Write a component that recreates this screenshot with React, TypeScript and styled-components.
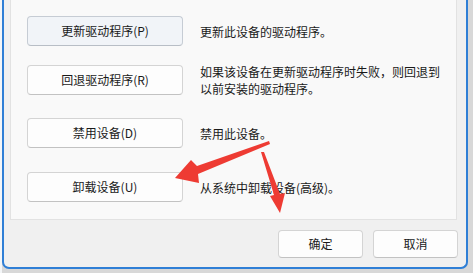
import React from "react";
import styled, { createGlobalStyle } from "styled-components";

const Global = createGlobalStyle`
  html, body { margin: 0; padding: 0; }
  body {
    width: 473px;
    height: 273px;
    overflow: hidden;
    background: #d5d5d5;
    font-family: "Noto Sans CJK SC", "Microsoft YaHei", sans-serif;
    color: #1a1a1a;
  }
`;

const Page = styled.div`
  position: relative;
  width: 473px;
  height: 273px;
  background: linear-gradient(to right, #f4f6f8 0 2px, #d8d8d8 2px);
`;

const Window = styled.div`
  margin-left: 2px;
  width: 466px;
  height: 269px;
  box-sizing: border-box;
  border: 2px solid #2f7fd6;
  border-top: none;
  border-radius: 0 0 7px 7px;
  background: #f0f0f0;
  display: flex;
  flex-direction: column;
  padding: 0 0 9px 6px;
`;

const Panel = styled.div`
  width: 447px;
  height: 220px;
  box-sizing: border-box;
  background: #f9f9f9;
  border: 1px solid #e2e2e2;
  border-top: none;
  padding: 0 0 0 16px;
  display: flex;
  flex-direction: column;
`;

const Row = styled.div<{ $gap: number }>`
  display: flex;
  align-items: center;
  height: 30px;
  margin-top: ${(p) => p.$gap}px;
  gap: 17px;
`;

const Button = styled.button<{ $focused?: boolean; $w: number; $h: number }>`
  width: ${(p) => p.$w}px;
  height: ${(p) => p.$h}px;
  flex: none;
  box-sizing: border-box;
  border: 1px solid ${(p) => (p.$focused ? "#c6ccd4" : "#d4d4d4")};
  border-bottom-color: ${(p) => (p.$focused ? "#b8bec6" : "#c2c2c2")};
  border-radius: 4px;
  background: ${(p) => (p.$focused ? "#f1f4f8" : "#fdfdfd")};
  font-family: inherit;
  font-size: 12px;
  color: #1a1a1a;
  padding: 0;
  line-height: 1;
  display: flex;
  align-items: center;
  justify-content: center;
`;

const Desc = styled.div`
  font-size: 12px;
  line-height: 17px;
  color: #1a1a1a;
  white-space: pre-line;
`;

const Footer = styled.div`
  display: flex;
  justify-content: flex-end;
  gap: 10px;
  margin-top: 10px;
  padding-right: 8px;
`;

const Overlay = styled.svg`
  position: absolute;
  left: 0;
  top: 0;
  pointer-events: none;
`;

const rows = [
  { label: "更新驱动程序(P)", desc: "更新此设备的驱动程序。", gap: 16, focused: true },
  { label: "回退驱动程序(R)", desc: "如果该设备在更新驱动程序时失败，则回退到\n以前安装的驱动程序。", gap: 19 },
  { label: "禁用设备(D)", desc: "禁用此设备。", gap: 23 },
  { label: "卸载设备(U)", desc: "从系统中卸载设备(高级)。", gap: 24 },
];

export default function App() {
  return (
    <>
      <Global />
      <Page>
        <Window>
          <Panel>
            {rows.map((r) => (
              <Row key={r.label} $gap={r.gap}>
                <Button $w={156} $h={30} $focused={r.focused}>
                  {r.label}
                </Button>
                <Desc>{r.desc}</Desc>
              </Row>
            ))}
          </Panel>
          <Footer>
            <Button $w={85} $h={28}>确定</Button>
            <Button $w={85} $h={28}>取消</Button>
          </Footer>
        </Window>
        <Overlay width={473} height={273} viewBox="0 0 473 273">
          <polygon
            fill="#ee3b33"
            points="269,141 197,166 191,160 175,178 199,183 198,174 270,144"
          />
          <polygon
            fill="#ee3b33"
            points="261,152 274,195 270,196 280,213 285,193 280,194 264,152"
          />
        </Overlay>
      </Page>
    </>
  );
}
